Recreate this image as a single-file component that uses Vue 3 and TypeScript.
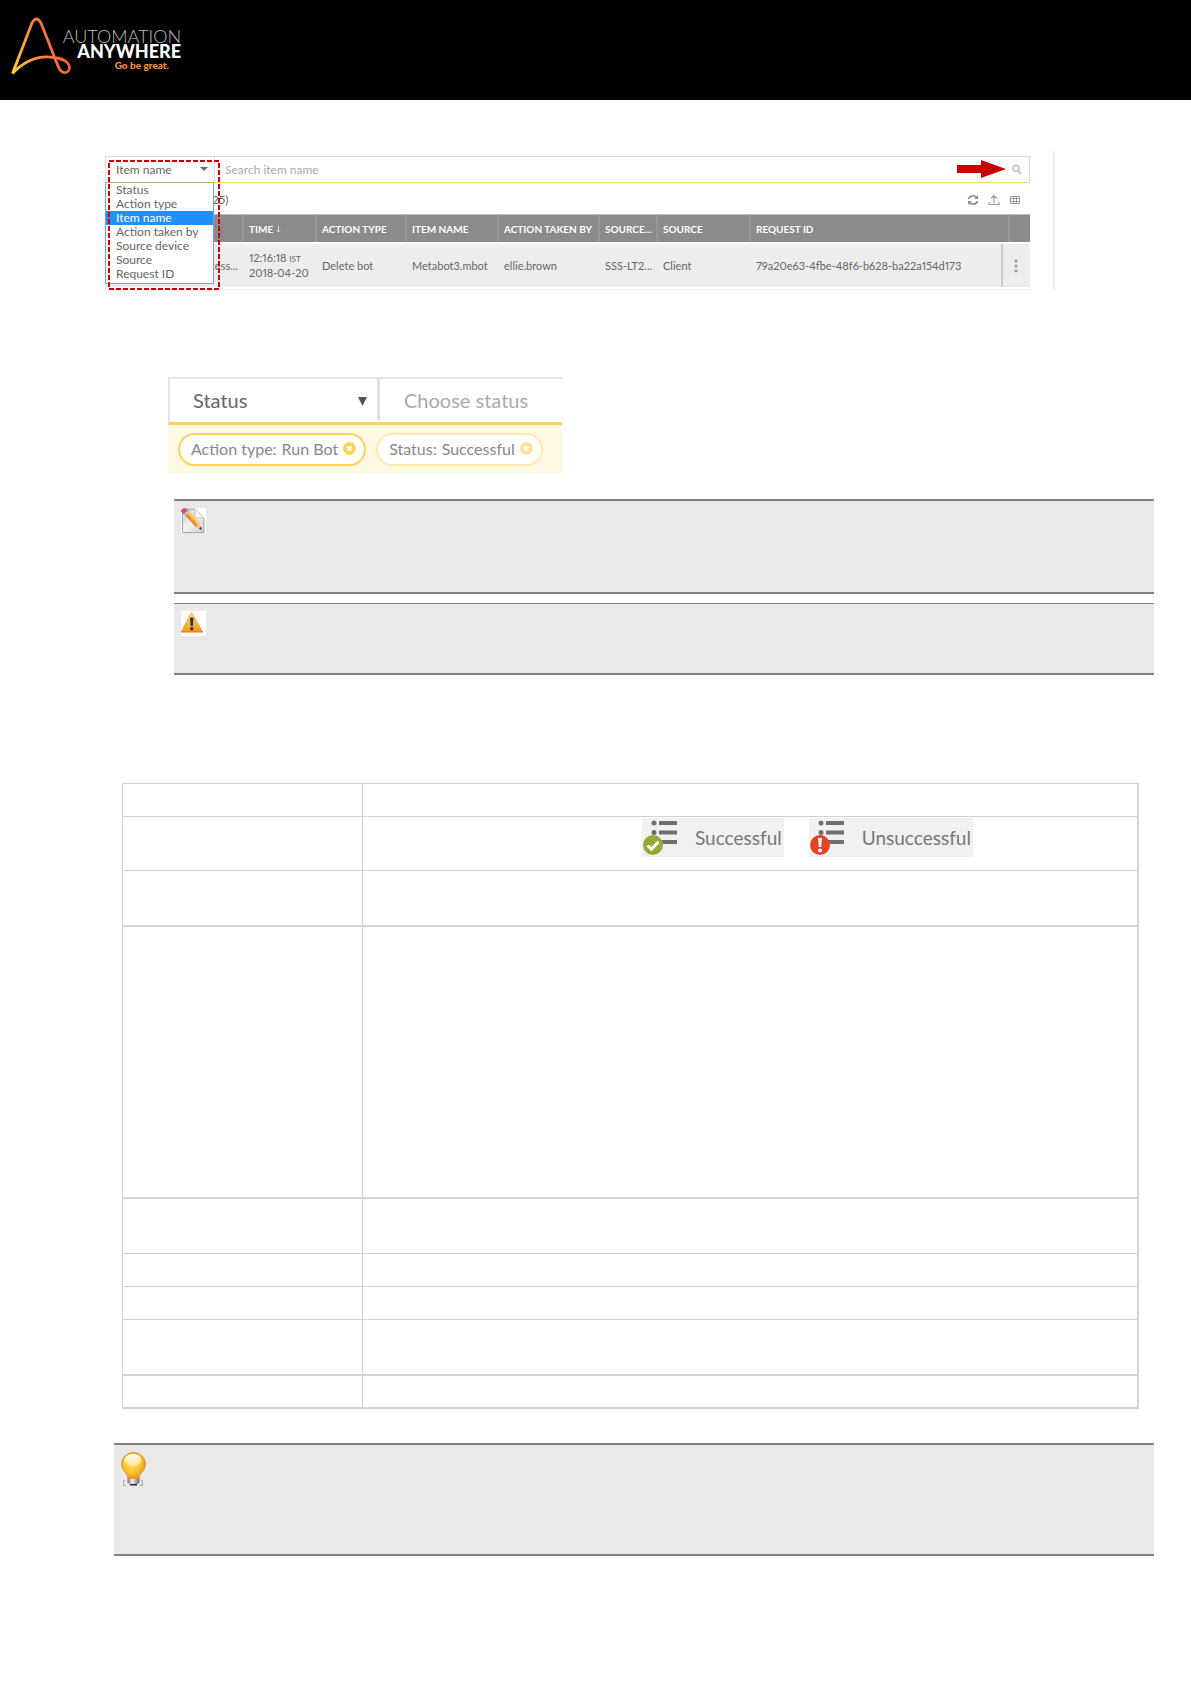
<script setup lang="ts">
interface Column {
  label: string
  span?: number
}

const searchFields: string[] = [
  'Status',
  'Action type',
  'Item name',
  'Action taken by',
  'Source device',
  'Source',
  'Request ID',
]
const selectedField = 'Item name'

const columns: Column[] = [
  { label: '' },
  { label: 'TIME' },
  { label: 'ACTION TYPE' },
  { label: 'ITEM NAME' },
  { label: 'ACTION TAKEN BY' },
  { label: 'SOURCE...' },
  { label: 'SOURCE' },
  { label: 'REQUEST ID', span: 2 },
  { label: '' },
]

const chips = [
  { name: 'Action type:', value: 'Run Bot', faded: false },
  { name: 'Status:', value: 'Successful', faded: true },
]

const laterRows: string[] = ['medium', 'tall', 'plain', 'short', 'short', 'medium', 'last']
</script>

<template>
  <div class="page">
    <header class="brand">
      <svg class="brand-mark" width="62" height="60" viewBox="0 0 62 60" aria-hidden="true">
        <defs>
          <linearGradient id="brandStroke" gradientUnits="userSpaceOnUse" x1="0" y1="58" x2="56" y2="40">
            <stop offset="0" stop-color="#ffd92e" />
            <stop offset="0.5" stop-color="#f8923a" />
            <stop offset="1" stop-color="#ee5a3a" />
          </linearGradient>
        </defs>
        <path
          d="M1.500 57.500 L21 7 Q25.500 -1 30 7 L47 50 Q50 57.500 55 56.500 Q60 54 58 49 Q55 43 43 41.500 Q20 38 1.500 57.500"
          fill="none" stroke="url(#brandStroke)" stroke-width="2.800" stroke-linejoin="round"
        />
      </svg>
      <div class="brand-name">
        <span class="brand-thin">AUTOMATION</span>
        <span class="brand-bold">ANYWHERE</span>
        <span class="brand-tag">Go be great.</span>
      </div>
    </header>

    <main>
      <section class="audit">
        <div class="audit-body">
          <div class="search">
            <select class="field-select" aria-label="Search field">
              <option>Item name</option>
            </select>
            <svg class="caret" width="8" height="4" viewBox="0 0 8 4" aria-hidden="true"><path d="M0 0h8L4 4z" fill="#666" /></svg>
            <input class="search-input" type="text" placeholder="Search item name" aria-label="Search item name" />
            <svg class="pointer" width="49" height="18" viewBox="0 0 49 18" aria-hidden="true">
              <path d="M0 5h24V0l25 9-25 9v-5H0z" fill="#c80000" />
            </svg>
            <button class="icon-button" type="button" aria-label="Search">
              <svg width="10" height="11" viewBox="0 0 10 11"><circle cx="4" cy="4.300" r="3" fill="none" stroke="#c4c4c4" stroke-width="1.800" /><path d="M6.200 6.700l3 3.200" stroke="#c4c4c4" stroke-width="2" /></svg>
            </button>
          </div>

          <div class="toolbar">
            <strong class="count">25)</strong>
            <div class="tools">
              <button class="icon-button" type="button" aria-label="Refresh">
                <svg width="12" height="12" viewBox="0 0 12 12" fill="none" stroke="#8e8e8e" stroke-width="1.700"><path d="M1.500 5A4.500 4 0 0 1 9.500 3.500M10.500 7A4.500 4 0 0 1 2.500 8.500" /><path d="M11 1v4H7.200zM1 11V7h3.800z" fill="#8e8e8e" stroke="none" /></svg>
              </button>
              <button class="icon-button" type="button" aria-label="Export">
                <svg width="12" height="12" viewBox="0 0 12 12" fill="none" stroke="#a0a0a0" stroke-width="1.200"><path d="M6 9V2M3 4.500L6 1.500l3 3M1 8v2.500h10V8" /></svg>
              </button>
              <button class="icon-button" type="button" aria-label="Columns">
                <svg width="12" height="12" viewBox="0 0 12 12" fill="none" stroke="#a0a0a0"><path d="M1.500 2.500h9v7h-9zM1.500 4.500h9M1.500 7.500h9M4.500 2v8M7.500 2v8" /></svg>
              </button>
            </div>
          </div>

          <table class="log">
            <colgroup>
              <col class="w-status" /><col class="w-time" /><col class="w-type" /><col class="w-item" />
              <col class="w-by" /><col class="w-device" /><col class="w-source" /><col /><col class="w-edge" /><col class="w-menu" />
            </colgroup>
            <thead>
              <tr>
                <th v-for="(column, i) in columns" :key="i" :colspan="column.span ?? 1">
                  {{ column.label }}
                  <svg v-if="column.label === 'TIME'" width="5" height="7" viewBox="0 0 5 7" fill="none" stroke="#ddd"><path d="M2.500 0v6M.500 4l2 2 2-2" /></svg>
                </th>
              </tr>
            </thead>
            <tbody>
              <tr>
                <td class="clipped">cess...</td>
                <td>12:16:18 <small>IST</small><br />2018-04-20</td>
                <td>Delete bot</td>
                <td>Metabot3.mbot</td>
                <td>ellie.brown</td>
                <td>SSS-LT2...</td>
                <td>Client</td>
                <td>79a20e63-4fbe-48f6-b628-ba22a154d173</td>
                <td class="menu-cell" colspan="2">
                  <button class="icon-button" type="button" aria-label="Row actions">
                    <svg width="4" height="14" viewBox="0 0 4 14" fill="#999"><circle cx="2" cy="2" r="1.500" /><circle cx="2" cy="7" r="1.500" /><circle cx="2" cy="12" r="1.500" /></svg>
                  </button>
                </td>
              </tr>
            </tbody>
          </table>

          <ul class="options" role="listbox" aria-label="Search fields">
            <li v-for="field in searchFields" :key="field" role="option" :aria-selected="field === selectedField" :class="{ chosen: field === selectedField }">{{ field }}</li>
          </ul>
          <svg class="outline" width="112" height="130" viewBox="0 0 112 130" aria-hidden="true">
            <rect x="1" y="1" width="110" height="128" fill="none" stroke="#c80000" stroke-width="2" stroke-dasharray="5 2" />
          </svg>
        </div>
      </section>

      <section class="filter">
        <div class="filter-row">
          <select class="filter-select" aria-label="Filter field">
            <option>Status</option>
          </select>
          <svg class="filter-caret" width="10" height="10" viewBox="0 0 10 10" aria-hidden="true"><path d="M0 1h9L4.500 10z" fill="#555" /></svg>
          <input class="filter-input" type="text" placeholder="Choose status" aria-label="Choose status" />
        </div>
        <div class="chips">
          <span v-for="chip in chips" :key="chip.name" class="chip" :class="{ faded: chip.faded }">
            <span>{{ chip.name }}</span>
            <span>{{ chip.value }}</span>
            <button class="icon-button" type="button" :aria-label="'Remove ' + chip.value">
              <svg width="13" height="13" viewBox="0 0 13 13"><circle cx="6.500" cy="6.500" r="6.500" fill="#ffd25a" /><path d="M4.500 4.500l4 4M8.500 4.500l-4 4" stroke="#fff" stroke-width="2" /></svg>
            </button>
          </span>
        </div>
      </section>

      <aside class="note note-pencil">
        <svg width="25" height="25" viewBox="0 0 25 25" aria-hidden="true">
          <defs>
            <linearGradient id="paper" x1="0" y1="0" x2="1" y2="1"><stop offset="0" stop-color="#c9c9c9" /><stop offset="0.500" stop-color="#f2f2f2" /><stop offset="1" stop-color="#cfcfcf" /></linearGradient>
          </defs>
          <path d="M0 0h25v25H0z" fill="#fff" />
          <path d="M1.500 1h12.500l9 9v14.500H1.500z" fill="url(#paper)" stroke="#a5a5a5" />
          <path d="M14 1v9h9z" fill="#fafafa" stroke="#c4c4c4" />
          <path d="M3 6L7 2l12 13-4 4z" fill="#f3a63c" />
          <path d="M5.500 3.500L7 2l12 13-1.500 1.500z" fill="#ffd27c" />
          <path d="M3 6l1.200-1.200 12 13L15 19z" fill="#d98a2b" />
          <path d="M15 19l4-4 1.500 7z" fill="#e8c999" /><path d="M18 20.500l2-1.800.800 3.600z" fill="#333" />
          <path d="M0 3.500Q0 0 4 0l3.500 2.500L3.200 6.500z" fill="#cf5267" /><path d="M2.800 6l4.500-4 1.200 1.400L4 7.400z" fill="#c8c8c8" />
        </svg>
      </aside>

      <aside class="note note-warning">
        <svg width="25" height="25" viewBox="0 0 25 25" aria-hidden="true">
          <defs>
            <linearGradient id="warn" x1="0" y1="0" x2="0" y2="1"><stop offset="0" stop-color="#ffe9a6" /><stop offset="0.500" stop-color="#f9bd45" /><stop offset="1" stop-color="#ee9a20" /></linearGradient>
          </defs>
          <path d="M0 0h25v25H0z" fill="#fff" />
          <path d="M10.700 1.500L.500 20.500h20.800z" fill="url(#warn)" stroke="#f0a63c" stroke-linejoin="round" />
          <path d="M0 20.800h22" stroke="#e77f24" stroke-width="1.500" />
          <path d="M9 7.500Q10.700 5 12.500 7.500L11.800 15H9.700z" fill="#333" /><circle cx="10.700" cy="17.700" r="1.700" fill="#333" />
        </svg>
      </aside>

      <table class="fields">
        <colgroup><col class="fields-name" /><col /></colgroup>
        <tbody>
          <tr class="short"><th></th><td></td></tr>
          <tr class="status-row">
            <th></th>
            <td>
              <div class="badges">
                <span class="badge">
                  <svg width="35" height="39" viewBox="0 0 35 39" aria-hidden="true">
                    <g fill="#6f6f6f"><circle cx="12" cy="5" r="2.500" /><circle cx="12" cy="14.500" r="2.500" /><path d="M17 3h18v4H17zM17 12.500h18v4H17zM17 22h18v4H17z" /></g>
                    <circle cx="11" cy="27" r="10" fill="#9aa63a" /><path d="M5.500 27.500l4 3.700 7-7.500" fill="none" stroke="#fff" stroke-width="3" />
                  </svg>
                  Successful
                </span>
                <span class="badge">
                  <svg width="35" height="39" viewBox="0 0 35 39" aria-hidden="true">
                    <g fill="#6f6f6f"><circle cx="12" cy="5" r="2.500" /><circle cx="12" cy="14.500" r="2.500" /><path d="M17 3h18v4H17zM17 12.500h18v4H17zM17 22h18v4H17z" /></g>
                    <circle cx="11" cy="27" r="10" fill="#e24329" /><path d="M9 20h4l-.800 9H9.800z" fill="#fff" /><circle cx="11" cy="32.500" r="2" fill="#fff" />
                  </svg>
                  Unsuccessful
                </span>
              </div>
            </td>
          </tr>
          <tr v-for="(size, i) in laterRows" :key="i" :class="size"><th></th><td></td></tr>
        </tbody>
      </table>

      <aside class="note note-tip">
        <svg width="26" height="35" viewBox="0 0 26 35" aria-hidden="true">
          <defs>
            <radialGradient id="glass" cx="0.450" cy="0.400" r="0.600"><stop offset="0" stop-color="#ffe477" /><stop offset="0.600" stop-color="#f9c52a" /><stop offset="1" stop-color="#e98a22" /></radialGradient>
            <linearGradient id="shine" x1="0" y1="0" x2="0" y2="1"><stop offset="0" stop-color="#fff" /><stop offset="1" stop-color="#fff" stop-opacity="0.300" /></linearGradient>
            <linearGradient id="cap" x1="0" y1="0" x2="1" y2="0"><stop offset="0" stop-color="#777" /><stop offset="0.400" stop-color="#f2f2f2" /><stop offset="1" stop-color="#666" /></linearGradient>
          </defs>
          <path d="M4 28.500H2.500v5H5M20 28.500h1.500v5H19" fill="none" stroke="#aaa" />
          <path d="M12.500.500A12 11.700 0 0 1 24.500 12Q24.500 17 20.500 20.500Q18 23 18 27.500H7Q7 23 4.500 20.500Q.500 17 .500 12A12 11.700 0 0 1 12.500.500z" fill="url(#glass)" stroke="#e09137" />
          <ellipse cx="12" cy="8" rx="8.500" ry="6" fill="url(#shine)" />
          <path d="M6.500 27h12v4q-6 4-12 0z" fill="url(#cap)" /><path d="M9 32h7v1.500H9z" fill="#222" />
        </svg>
      </aside>
    </main>
  </div>
</template>

<style>
body {
  margin: 0;
  background: #fff;
}
</style>

<style scoped>
* {
  box-sizing: border-box;
}

.page {
  font-family: Lato, "Liberation Sans", sans-serif;
  font-variant-numeric: proportional-nums;
  color: #666;
}

.brand {
  display: flex;
  padding: 16px 11px;
  height: 100px;
  background: #000;
}

.brand-mark {
  flex: none;
}

.brand-name {
  display: flex;
  flex-direction: column;
  align-items: flex-end;
  width: 108px;
  padding-top: 13px;
  line-height: 15px;
  white-space: nowrap;
  color: #fff;
}

.brand-thin {
  font-size: 18px;
  font-weight: 300;
  color: #bbb;
}

.brand-bold {
  font-size: 18px;
  font-weight: 900;
}

.brand-tag {
  padding-right: 12px;
  font-size: 10px;
  line-height: 13px;
  font-weight: 900;
  color: #f8923a;
}

select,
input {
  margin: 0;
  padding: 0;
  border: 0;
  border-radius: 0;
  background: transparent;
  font-family: inherit;
  color: inherit;
  appearance: none;
  outline: 0;
  min-width: 0;
}

input::placeholder {
  color: #aaa;
  opacity: 1;
}

.icon-button {
  display: flex;
  margin: 0;
  padding: 0;
  border: 0;
  background: none;
}

.audit {
  margin: 51px 136px 0 105px;
  padding: 5px 23px 0 0;
  border-right: 2px solid #eee;
}

.audit-body {
  position: relative;
}

.search {
  display: flex;
  align-items: center;
  height: 27px;
  padding: 0 7px 1px 0;
  border: 1px solid #ddd;
  border-bottom-color: #ffd966;
}

.field-select {
  width: 84px;
  padding-left: 10px;
  font-size: 12px;
}

.caret {
  margin: 0 6px 0 10px;
}

.search-input {
  flex: 1;
  height: 24px;
  padding-left: 10px;
  border-left: 1px solid #ddd;
  font-size: 12px;
}

.pointer {
  margin-right: 6px;
}

.toolbar {
  display: flex;
  align-items: center;
  justify-content: space-between;
  height: 31px;
  padding: 2px 9px 0 107px;
}

.count {
  font-size: 12px;
  font-weight: 400;
}

.tools {
  display: flex;
  gap: 9px;
}

.log {
  width: 100%;
  table-layout: fixed;
  border-spacing: 0;
  border-bottom: 1px solid #eee;
  font-size: 11px;
  line-height: 14px;
}

.w-status { width: 139px; }
.w-time { width: 73px; }
.w-type { width: 90px; }
.w-item { width: 92px; }
.w-by { width: 101px; }
.w-device { width: 58px; }
.w-source { width: 93px; }
.w-edge { width: 9px; }
.w-menu { width: 20px; }

.log th,
.log td {
  padding: 0 0 0 5px;
  text-align: left;
  white-space: nowrap;
}

.log th {
  height: 28px;
  border-top: 1px solid #bbb;
  border-right: 2px solid #979797;
  background: #8b8b8b;
  font-size: 10px;
  font-weight: 700;
  color: #fff;
}

.log th:last-child {
  border-right: 0;
}

.log td {
  height: 47px;
  border-top: 2px solid #fff;
  border-bottom: 2px solid #fff;
  background: #ededed;
}

.log small {
  font-size: 8px;
}

.log .clipped {
  padding-right: 6px;
  text-align: right;
}

.log .menu-cell {
  padding-left: 13px;
  box-shadow: inset 2px 0 1px #ccc;
}

.options {
  position: absolute;
  top: 26px;
  left: 0;
  width: 109px;
  margin: 0;
  padding: 0 0 2px;
  border: 1px solid #7f9fd0;
  border-top-color: #c5a55c;
  background: #fff;
  list-style: none;
  font-size: 12px;
  line-height: 14px;
}

.options li {
  padding-left: 10px;
}

.options .chosen {
  background: #1e90ff;
  color: #fff;
}

.outline {
  position: absolute;
  top: 4px;
  left: 3px;
}

.filter {
  width: 394px;
  margin: 87px 0 0 168px;
}

.filter-row {
  display: flex;
  align-items: center;
  height: 48px;
  padding-bottom: 2px;
  border-top: 2px solid #e4e4e4;
  border-left: 2px solid #e4e4e4;
  border-bottom: 3px solid #ffd25a;
}

.filter-select {
  width: 188px;
  padding-left: 23px;
  font-size: 20px;
}

.filter-caret {
  margin: 2px 9px 0 0;
}

.filter-input {
  flex: 1;
  height: 41px;
  padding-left: 24px;
  border-left: 3px solid #e0e0e0;
  font-size: 20px;
}

.chips {
  display: flex;
  gap: 10px;
  padding: 8px 10px 7px;
  background: #fff8e3;
}

.chip {
  display: flex;
  align-items: center;
  gap: 5px;
  height: 33px;
  padding: 0 8px 2px 11px;
  border: 2px solid #ffd25a;
  border-radius: 17px;
  background: #fff;
  font-size: 16px;
  white-space: nowrap;
  color: #888;
}

.chip.faded {
  border-color: #ffe9ae;
}

.chip.faded svg {
  opacity: 0.6;
}

.note {
  margin: 0 37px 0 174px;
  padding: 7px;
  border-top: 2px solid #808080;
  border-bottom: 2px solid #808080;
  background: #e9e9e9;
}

.note svg {
  display: block;
}

.note-pencil {
  height: 95px;
  margin-top: 26px;
}

.note-warning {
  height: 72px;
  margin-top: 9px;
  border-top-width: 1px;
}

.note-tip {
  height: 113px;
  margin-top: 34px;
  margin-left: 114px;
}

.fields {
  width: calc(100% - 174px);
  margin: 108px 52px 0 122px;
  table-layout: fixed;
  border-spacing: 0;
  border: 1px solid #d3d3d3;
  border-right-width: 2px;
  border-bottom: 0;
}

.fields-name {
  width: 240px;
}

.fields th,
.fields td {
  padding: 0;
  border-bottom: 1px solid #d3d3d3;
  vertical-align: top;
}

.fields th {
  border-right: 1px solid #d3d3d3;
}

.short > *,
.last > * {
  height: 33px;
}

.status-row > * {
  height: 54px;
}

.medium > * {
  height: 56px;
}

.tall > * {
  height: 272px;
}

.plain > * {
  height: 55px;
}

.fields .medium > *,
.fields .tall > *,
.fields .last > * {
  border-bottom-width: 2px;
}

.badges {
  display: flex;
  gap: 25px;
  padding: 1px 0 0 279px;
}

.badge {
  display: flex;
  gap: 18px;
  height: 39px;
  padding-right: 2px;
  background: #f1f1f1;
  font-size: 19px;
  line-height: 39px;
  color: #777;
}
</style>
